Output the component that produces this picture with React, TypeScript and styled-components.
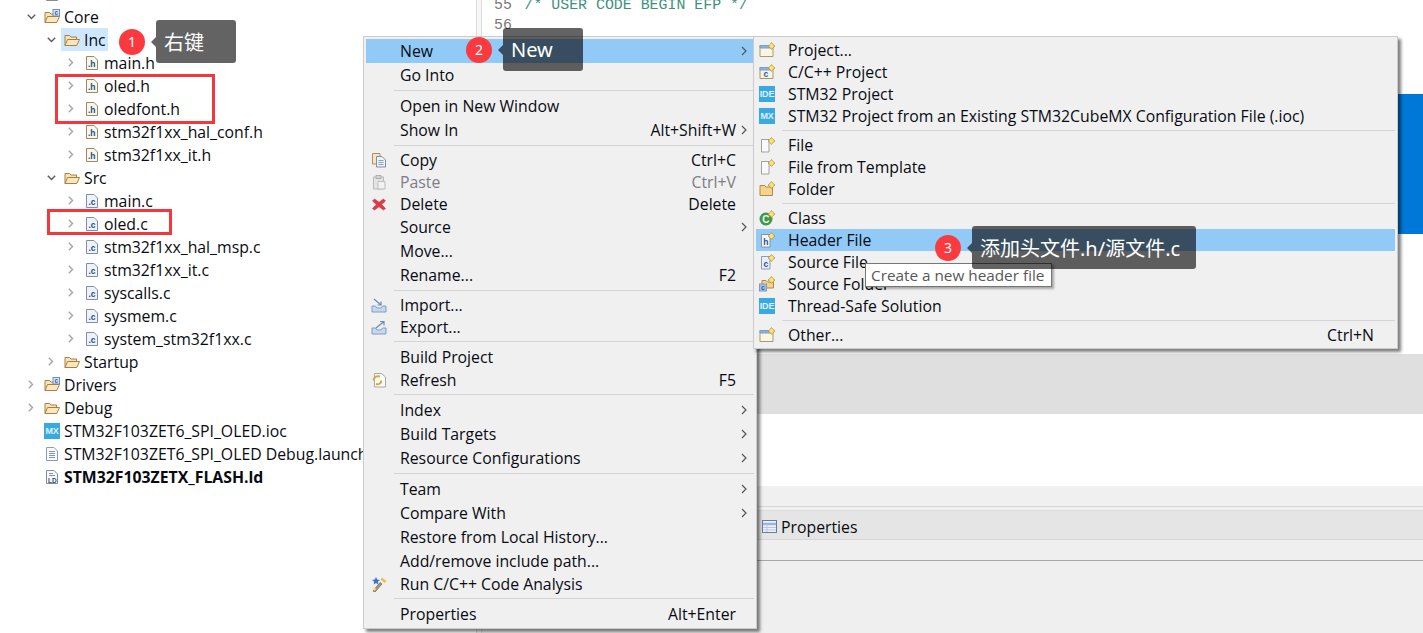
import React from 'react';
import styled, { createGlobalStyle } from 'styled-components';

const UI_FONT = '"Open Sans", "Noto Sans CJK SC", sans-serif';

const GlobalStyle = createGlobalStyle`
  html, body {
    margin: 0;
    padding: 0;
    background: #fff;
    overflow: hidden;
  }
  * {
    box-sizing: border-box;
  }
`;

/* page */
const Page = styled.div`
  position: relative;
  width: 1423px;
  height: 633px;
  overflow: hidden;
  display: flex;
  background: #fff;
  color: #080b12;
  font-family: ${UI_FONT};
  font-size: 15.8px;
`;

const TreePane = styled.div`
  width: 477px;
  flex: none;
  overflow: hidden;
  white-space: nowrap;
  border-right: 1px solid #dcdcdc;
`;

const Sash = styled.div`
  width: 5px;
  flex: none;
  background: #f6f6f6;
  border-right: 1px solid #dcdcdc;
`;

const RightColumn = styled.div`
  flex: 1;
  display: flex;
  flex-direction: column;
  min-width: 0;
`;

/* tree */
const TreeList = styled.div`
  margin-top: -18px;
`;

const TreeRow = styled.div<{ $level: number }>`
  height: 23px;
  display: flex;
  align-items: center;
  padding-left: ${({ $level }) => 24 + $level * 20}px;
`;

const TreeChevron = styled.span`
  width: 14px;
  height: 23px;
  flex: none;
  display: flex;
  align-items: center;
  justify-content: center;
`;

const TreeEntry = styled.span<{ $selected?: boolean; $bold?: boolean }>`
  height: 23px;
  display: flex;
  align-items: center;
  margin-left: ${({ $selected }) => ($selected ? 3 : 4)}px;
  padding-left: ${({ $selected }) => ($selected ? 1 : 0)}px;
  padding-right: 2px;
  background: ${({ $selected }) => ($selected ? '#cde8ff' : 'transparent')};
  font-weight: ${({ $bold }) => ($bold ? 700 : 400)};
`;

const TreeIconSlot = styled.span`
  width: 22px;
  flex: none;
  display: flex;
  justify-content: flex-start;
  padding-left: 2px;
`;

/* editor and the views below it */
const CodePane = styled.div`
  height: 94px;
  overflow: hidden;
  font-family: "Liberation Mono", monospace;
  font-size: 14.9px;
`;

const CodeLines = styled.div`
  margin-top: -5px;
`;

const CodeLine = styled.div`
  height: 20px;
  line-height: 20px;
  display: flex;
  padding-left: 12px;
`;

const LineNumber = styled.span`
  width: 30.5px;
  color: #787878;
`;

const CodeComment = styled.span`
  color: #3f8f7f;
`;

const AccentBlock = styled.div`
  align-self: flex-end;
  width: 25px;
  height: 140px;
  flex: none;
  background: #0078d7;
`;

const EditorRest = styled.div`
  height: 120px;
  flex: none;
`;

const GreyBand = styled.div`
  height: 60px;
  flex: none;
  background: #dfdfdf;
`;

const WhiteBand = styled.div`
  height: 72px;
  flex: none;
`;

const ViewHeader = styled.div`
  height: 21px;
  flex: none;
  background: #f0f0f0;
  border-bottom: 1px solid #d6d6d6;
`;

const TabGap = styled.div`
  height: 4px;
  flex: none;
  background: #f0f0f0;
  border-bottom: 1px solid #dcdcdc;
`;

const TabBar = styled.div`
  height: 29px;
  flex: none;
  display: flex;
  align-items: center;
  gap: 3px;
  padding: 3px 0 0 280px;
  background: #e5e5e5;
  border-bottom: 1px solid #d6d6d6;
`;

const ToolStrip = styled.div`
  height: 21px;
  flex: none;
  background: #efefef;
  border-bottom: 1px solid #a8a8a8;
`;

const ViewBody = styled.div`
  flex: 1;
  background: #efefef;
`;

/* context menus */
const Menu = styled.div<{ $x: number; $width: number }>`
  position: absolute;
  left: ${({ $x }) => $x}px;
  top: 36px;
  width: ${({ $width }) => $width}px;
  padding: 2px;
  background: #f0f0f0;
  border: 1px solid #cbcbcb;
  box-shadow: 3px 3px 3px rgba(0, 0, 0, 0.5);
`;

const MenuRow = styled.div<{ $active?: boolean; $tall: boolean; $inset: number; $end: number }>`
  height: ${({ $tall }) => ($tall ? 24 : 22)}px;
  display: flex;
  align-items: center;
  padding-left: ${({ $inset }) => $inset}px;
  padding-right: ${({ $end }) => $end}px;
  background: ${({ $active }) => ($active ? '#91c9f7' : 'transparent')};
`;

const MenuIconSlot = styled.span`
  width: 29px;
  flex: none;
  display: flex;
  align-items: center;
`;

const MenuLabel = styled.span<{ $disabled?: boolean }>`
  flex: 1;
  white-space: nowrap;
  color: ${({ $disabled }) => ($disabled ? '#7d7d85' : 'inherit')};
`;

const MenuShortcut = styled.span<{ $disabled?: boolean }>`
  white-space: nowrap;
  color: ${({ $disabled }) => ($disabled ? '#7d7d85' : 'inherit')};
`;

const SubmenuArrow = styled.svg`
  width: 6px;
  height: 10px;
  flex: none;
  margin-left: 5px;
  margin-right: -11px;
`;

const MenuSeparator = styled.div<{ $inset: number }>`
  height: 7px;
  margin-left: ${({ $inset }) => $inset}px;
  display: flex;
  align-items: center;

  &::after {
    content: '';
    flex: 1;
    height: 1px;
    background: #d4d4d4;
  }
`;

const HoverHint = styled.div`
  position: absolute;
  left: 865px;
  top: 263px;
  width: 187px;
  height: 24px;
  padding-left: 5px;
  display: flex;
  align-items: center;
  background: #fff;
  border: 1px solid #767676;
  box-shadow: 2px 2px 2px rgba(0, 0, 0, 0.3);
  color: #575757;
  font-size: 15.3px;
  white-space: nowrap;
`;

/* red annotations from the tutorial */
const Outline = styled.div<{ $x: number; $y: number; $w: number; $h: number }>`
  position: absolute;
  left: ${({ $x }) => $x}px;
  top: ${({ $y }) => $y}px;
  width: ${({ $w }) => $w}px;
  height: ${({ $h }) => $h}px;
  border: 3px solid #f2383c;
`;

const Callout = styled.div<{ $x: number; $y: number }>`
  position: absolute;
  left: ${({ $x }) => $x}px;
  top: ${({ $y }) => $y}px;
  height: 43px;
  display: flex;
  align-items: center;
  gap: 11px;
`;

const StepDot = styled.div`
  width: 26px;
  height: 26px;
  border-radius: 50%;
  background: #fb3a3f;
  color: #fff;
  display: flex;
  align-items: center;
  justify-content: center;
  font-family: "Noto Sans", sans-serif;
  font-size: 14px;
`;

const CalloutBubble = styled.div`
  position: relative;
  height: 43px;
  min-width: 80px;
  padding: 0 16px 0 8px;
  display: flex;
  align-items: center;
  border-radius: 3px;
  background: rgba(0, 0, 0, 0.61);
  color: #fff;
  font-family: "Noto Sans", "Noto Sans CJK SC", sans-serif;
  font-size: 20px;
  white-space: nowrap;

  &::before {
    content: '';
    position: absolute;
    left: -5px;
    top: 17px;
    border-style: solid;
    border-width: 5px 5px 5px 0;
    border-color: transparent rgba(0, 0, 0, 0.61) transparent transparent;
  }
`;

/* square product marks */
const ProductMark = styled.span`
  width: 16px;
  height: 16px;
  flex: none;
  display: flex;
  align-items: center;
  justify-content: center;
  background: #39a9e1;
  color: #dff2fb;
  font-family: "Liberation Sans", sans-serif;
  font-size: 9px;
  font-weight: 700;
  letter-spacing: -0.2px;
`;

/* drawn icons */
type IconName =
  | 'page' | 'folder' | 'sourceFolder' | 'hFile' | 'cFile' | 'textFile' | 'ldFile'
  | 'copy' | 'paste' | 'delete' | 'import' | 'export' | 'refresh' | 'wand'
  | 'newProject' | 'newCProject' | 'newFile' | 'newFolder' | 'newClass'
  | 'newHeader' | 'newSource' | 'newSourceFolder' | 'table' | 'ide' | 'mx';

const Spark = () => (
  <path d="M12.5 0.5 L14 2.5 L16 4 L14 5.5 L12.5 7.5 L11 5.5 L9 4 L11 2.5 Z" fill="#fbe37a" stroke="#b8923a" strokeWidth="0.8" />
);

const smallCode = (letter: string, x: number, y: number, fill = '#25507f') => (
  <text x={x} y={y} fontFamily="Liberation Sans, sans-serif" fontSize="8.5" fontWeight="700" fill={fill}>
    {letter}
  </text>
);

const Page16 = ({ stroke }: { stroke: string }) => (
  <path d="M2.5 1.5H10L13.5 5V14.5H2.5Z" fill="#f7f9fc" stroke={stroke} />
);

const FolderShape = () => (
  <>
    <path d="M1 13.5V3.5H5.5L7 5H12.5V8" fill="#f6e3b8" stroke="#a9803f" />
    <path d="M1 13.5L3.5 7.5H15.5L12.8 13.5Z" fill="#f9e6bd" stroke="#a9803f" />
  </>
);

const icons: Record<Exclude<IconName, 'ide' | 'mx'>, React.ReactNode> = {
  page: <Page16 stroke="#8d8d8d" />,
  folder: <FolderShape />,
  sourceFolder: (
    <>
      <FolderShape />
      <rect x="9" y="0.5" width="6.5" height="6.5" fill="#dbe6f5" stroke="#6c8ebf" />
      <text x="10.4" y="6" fontFamily="Liberation Sans, sans-serif" fontSize="6.5" fontWeight="700" fill="#2f5f9f">c</text>
    </>
  ),
  hFile: (
    <>
      <path d="M2.5 1.5H10L13.5 5V14.5H2.5Z" fill="#f8f6ee" stroke="#9c8a5c" />
      {smallCode('.h', 4, 12)}
    </>
  ),
  cFile: (
    <>
      <path d="M2.5 1.5H10L13.5 5V14.5H2.5Z" fill="#eef3fa" stroke="#7f8ea6" />
      {smallCode('.c', 4.5, 12)}
    </>
  ),
  textFile: (
    <>
      <Page16 stroke="#8c9bb5" />
      <path d="M5 5.5H11M5 7.5H11M5 9.5H11M5 11.5H11" stroke="#7f93b8" />
    </>
  ),
  ldFile: (
    <>
      <Page16 stroke="#7f8ea6" />
      <path d="M5 4.5H9M5 6.5H11" stroke="#7f93b8" />
      <text x="4" y="14" fontFamily="Liberation Sans, sans-serif" fontSize="6.5" fontWeight="700" fill="#3b4c66">LD</text>
    </>
  ),
  copy: (
    <>
      <path d="M1.5 1.5H9V12H1.5Z" fill="#f3e6c6" stroke="#a9925f" />
      <path d="M5.5 4.5H11L14.5 8V15H5.5Z" fill="#eef2fa" stroke="#7f8ea6" />
      <path d="M7.5 8.5H12.5M7.5 10.5H12.5M7.5 12.5H12.5" stroke="#8aa0c4" />
    </>
  ),
  paste: (
    <>
      <path d="M2.5 3H12.5V15H2.5Z" fill="#e3e3e3" stroke="#b9b9b9" />
      <path d="M5 1.5H10V4.5H5Z" fill="#d4d4d4" stroke="#adadad" />
      <path d="M7 7.5H14V15H7Z" fill="#f2f2f2" stroke="#bdbdbd" />
    </>
  ),
  delete: <path d="M3.5 3L8 6.2L12.5 3L14.5 5L10.6 8.5L14.5 12.5L12.5 14L8 10.8L3.5 14L1.5 12.5L5.4 8.5L1.5 5Z" fill="#dc3a44" stroke="#c23a44" strokeWidth="0.6" />,
  import: (
    <>
      <path d="M1 9V15H15V9H11.5L10 11H6L4.5 9Z" fill="#c8d8ec" stroke="#7f9cc4" />
      <path d="M3 2L10 8M10 4.5V8H6.5" fill="none" stroke="#6a8ab8" strokeWidth="1.2" />
    </>
  ),
  export: (
    <>
      <path d="M1 9V15H15V9H11.5L10 11H6L4.5 9Z" fill="#c8d8ec" stroke="#7f9cc4" />
      <path d="M5 9L13 2.5M9 2.5H13V6.5" fill="none" stroke="#6a8ab8" strokeWidth="1.2" />
    </>
  ),
  refresh: (
    <>
      <path d="M3.5 1.5H10.5L14.5 5V15H3.5Z" fill="#fbfbf8" stroke="#a8a8a0" />
      <path d="M9 4.5C5 3.5 2 6 3 8.5M5 12C8 13 10.5 11 10 8.5" fill="none" stroke="#d6a93f" strokeWidth="2" />
    </>
  ),
  wand: (
    <>
      <path d="M2 15L4 16L11 8L9 6.5Z" fill="#a79a83" stroke="#6b6250" strokeWidth="0.7" />
      <path d="M1.5 12.5L3.5 15L5 13L3.5 11Z" fill="#f7e27d" />
      <path d="M5 1L6.2 3.5L9 4L6.8 5.8L7.3 8.5L5 7L2.6 8.5L3.2 5.8L1 4L3.8 3.5Z" fill="#3f6fd0" />
      <path d="M11 1.5L15.5 5L13.5 7L9.5 3.5Z" fill="#e8c04f" />
    </>
  ),
  newProject: (
    <>
      <path d="M1 3.5H14V14.5H1Z" fill="#fbf6e4" stroke="#a99a6a" />
      <path d="M1 3.5H13V6H1Z" fill="#8db4e0" stroke="#7a9cc8" />
      <Spark />
    </>
  ),
  newCProject: (
    <>
      <path d="M1 3.5H14V14.5H1Z" fill="#f5f5ef" stroke="#a9985f" />
      <path d="M1 3.5H13V6H1Z" fill="#8db4e0" stroke="#7a9cc8" />
      {smallCode('c', 4.5, 13, '#2d5a96')}
      <Spark />
    </>
  ),
  newFile: (
    <>
      <path d="M2.5 2.5H10V15H2.5 Z" fill="#f7f9fc" stroke="#a3a392" />
      <Spark />
    </>
  ),
  newFolder: (
    <>
      <path d="M1 14.5V4.5H5.5L7 6H13.5V14.5Z" fill="#f5d28e" stroke="#b08a45" />
      <Spark />
    </>
  ),
  newClass: (
    <>
      <circle cx="7" cy="9" r="6.5" fill="#3e9a48" />
      <text x="3.2" y="12.5" fontFamily="Liberation Sans, sans-serif" fontSize="10" fontWeight="700" fill="#eef8ea">C</text>
      <Spark />
    </>
  ),
  newHeader: (
    <>
      <path d="M2.5 2.5H11V15H2.5Z" fill="#f6f8fc" stroke="#8d8fa6" />
      {smallCode('h', 4.2, 13, '#1f4f96')}
      <Spark />
    </>
  ),
  newSource: (
    <>
      <path d="M2.5 2.5H11V15H2.5Z" fill="#eaf0f9" stroke="#8d9ab8" />
      {smallCode('c', 4.5, 13, '#1f4f96')}
      <Spark />
    </>
  ),
  newSourceFolder: (
    <>
      <path d="M3 12V4.5H7L8.5 6H14.5V12Z" fill="#f5d28e" stroke="#b08a45" />
      <rect x="0.5" y="8" width="7" height="7" fill="#a9c0e4" stroke="#7c96c2" />
      <text x="2" y="14" fontFamily="Liberation Sans, sans-serif" fontSize="7" fontWeight="700" fill="#2f5f9f">c</text>
      <Spark />
    </>
  ),
  table: (
    <>
      <rect x="0.5" y="1.5" width="14" height="12" fill="#eef2f8" stroke="#5f7ea8" />
      <path d="M1 5H14" stroke="#9db4d4" strokeWidth="2.5" />
      <path d="M1 8.5H14M1 11H14M5 5V13" stroke="#b8c7dd" />
    </>
  ),
};

const Icon = ({ name }: { name?: IconName }) => {
  if (!name) return null;
  if (name === 'ide') return <ProductMark>IDE</ProductMark>;
  if (name === 'mx') return <ProductMark>MX</ProductMark>;
  return (
    <svg width="16" height="16" viewBox="0 0 16 16" style={{ flex: 'none' }}>
      {icons[name]}
    </svg>
  );
};

/* data */
type TreeItem = {
  level: number;
  label?: string;
  icon: IconName;
  arrow?: 'open' | 'closed';
  selected?: boolean;
  bold?: boolean;
};

const treeItems: TreeItem[] = [
  { level: 0, icon: 'page' },
  { level: 0, label: 'Core', icon: 'sourceFolder', arrow: 'open' },
  { level: 1, label: 'Inc', icon: 'folder', arrow: 'open', selected: true },
  { level: 2, label: 'main.h', icon: 'hFile', arrow: 'closed' },
  { level: 2, label: 'oled.h', icon: 'hFile', arrow: 'closed' },
  { level: 2, label: 'oledfont.h', icon: 'hFile', arrow: 'closed' },
  { level: 2, label: 'stm32f1xx_hal_conf.h', icon: 'hFile', arrow: 'closed' },
  { level: 2, label: 'stm32f1xx_it.h', icon: 'hFile', arrow: 'closed' },
  { level: 1, label: 'Src', icon: 'folder', arrow: 'open' },
  { level: 2, label: 'main.c', icon: 'cFile', arrow: 'closed' },
  { level: 2, label: 'oled.c', icon: 'cFile', arrow: 'closed' },
  { level: 2, label: 'stm32f1xx_hal_msp.c', icon: 'cFile', arrow: 'closed' },
  { level: 2, label: 'stm32f1xx_it.c', icon: 'cFile', arrow: 'closed' },
  { level: 2, label: 'syscalls.c', icon: 'cFile', arrow: 'closed' },
  { level: 2, label: 'sysmem.c', icon: 'cFile', arrow: 'closed' },
  { level: 2, label: 'system_stm32f1xx.c', icon: 'cFile', arrow: 'closed' },
  { level: 1, label: 'Startup', icon: 'folder', arrow: 'closed' },
  { level: 0, label: 'Drivers', icon: 'sourceFolder', arrow: 'closed' },
  { level: 0, label: 'Debug', icon: 'folder', arrow: 'closed' },
  { level: 0, label: 'STM32F103ZET6_SPI_OLED.ioc', icon: 'mx' },
  { level: 0, label: 'STM32F103ZET6_SPI_OLED Debug.launch', icon: 'textFile' },
  { level: 0, label: 'STM32F103ZETX_FLASH.ld', icon: 'ldFile', bold: true },
];

type MenuItem =
  | 'sep'
  | {
      label: string;
      icon?: IconName;
      shortcut?: string;
      more?: boolean;
      disabled?: boolean;
      active?: boolean;
    };

const mainMenu: MenuItem[] = [
  { label: 'New', more: true, active: true },
  { label: 'Go Into' },
  'sep',
  { label: 'Open in New Window' },
  { label: 'Show In', shortcut: 'Alt+Shift+W', more: true },
  'sep',
  { label: 'Copy', icon: 'copy', shortcut: 'Ctrl+C' },
  { label: 'Paste', icon: 'paste', shortcut: 'Ctrl+V', disabled: true },
  { label: 'Delete', icon: 'delete', shortcut: 'Delete' },
  { label: 'Source', more: true },
  { label: 'Move...' },
  { label: 'Rename...', shortcut: 'F2' },
  'sep',
  { label: 'Import...', icon: 'import' },
  { label: 'Export...', icon: 'export' },
  'sep',
  { label: 'Build Project' },
  { label: 'Refresh', icon: 'refresh', shortcut: 'F5' },
  'sep',
  { label: 'Index', more: true },
  { label: 'Build Targets', more: true },
  { label: 'Resource Configurations', more: true },
  'sep',
  { label: 'Team', more: true },
  { label: 'Compare With', more: true },
  { label: 'Restore from Local History...' },
  { label: 'Add/remove include path...' },
  { label: 'Run C/C++ Code Analysis', icon: 'wand' },
  'sep',
  { label: 'Properties', shortcut: 'Alt+Enter' },
];

const newMenu: MenuItem[] = [
  { label: 'Project...', icon: 'newProject' },
  { label: 'C/C++ Project', icon: 'newCProject' },
  { label: 'STM32 Project', icon: 'ide' },
  { label: 'STM32 Project from an Existing STM32CubeMX Configuration File (.ioc)', icon: 'mx' },
  'sep',
  { label: 'File', icon: 'newFile' },
  { label: 'File from Template', icon: 'newFile' },
  { label: 'Folder', icon: 'newFolder' },
  'sep',
  { label: 'Class', icon: 'newClass' },
  { label: 'Header File', icon: 'newHeader', active: true },
  { label: 'Source File', icon: 'newSource' },
  { label: 'Source Folder', icon: 'newSourceFolder' },
  { label: 'Thread-Safe Solution', icon: 'ide' },
  'sep',
  { label: 'Other...', icon: 'newProject', shortcut: 'Ctrl+N' },
];

const TreeArrow = ({ kind }: { kind?: 'open' | 'closed' }) => {
  if (kind === 'open') {
    return (
      <svg width="9" height="6" viewBox="0 0 9 6">
        <path d="M0.8 0.8L4.5 4.5L8.2 0.8" fill="none" stroke="#5c5c5c" strokeWidth="1.4" />
      </svg>
    );
  }
  if (kind === 'closed') {
    return (
      <svg width="6" height="9" viewBox="0 0 6 9">
        <path d="M0.8 0.8L4.5 4.5L0.8 8.2" fill="none" stroke="#a6a6a6" strokeWidth="1.4" />
      </svg>
    );
  }
  return null;
};

const ContextMenu = ({
  items, x, width, inset, end, sepInset, tallPlain,
}: {
  items: MenuItem[];
  x: number;
  width: number;
  inset: number;
  end: number;
  sepInset: number;
  tallPlain: boolean;
}) => (
  <Menu $x={x} $width={width}>
    {items.map((item, i) =>
      item === 'sep' ? (
        <MenuSeparator key={i} $inset={sepInset} />
      ) : (
        <MenuRow key={i} $active={item.active} $tall={tallPlain && !item.icon} $inset={inset} $end={end}>
          <MenuIconSlot>
            <Icon name={item.icon} />
          </MenuIconSlot>
          <MenuLabel $disabled={item.disabled}>{item.label}</MenuLabel>
          {item.shortcut && <MenuShortcut $disabled={item.disabled}>{item.shortcut}</MenuShortcut>}
          {item.more && (
            <SubmenuArrow viewBox="0 0 6 10">
              <path d="M1 1L5 5L1 9" fill="none" stroke="#555" strokeWidth="1.2" />
            </SubmenuArrow>
          )}
        </MenuRow>
      ),
    )}
  </Menu>
);

const Step = ({ n, x, y, text }: { n: number; x: number; y: number; text: string }) => (
  <Callout $x={x} $y={y}>
    <StepDot>{n}</StepDot>
    <CalloutBubble>{text}</CalloutBubble>
  </Callout>
);

export default function App() {
  return (
    <>
      <GlobalStyle />
      <Page>
        <TreePane>
          <TreeList>
            {treeItems.map((item, i) => (
              <TreeRow key={i} $level={item.level}>
                <TreeChevron>
                  <TreeArrow kind={item.arrow} />
                </TreeChevron>
                <TreeEntry $selected={item.selected} $bold={item.bold}>
                  <TreeIconSlot>
                    <Icon name={item.icon} />
                  </TreeIconSlot>
                  {item.label}
                </TreeEntry>
              </TreeRow>
            ))}
          </TreeList>
        </TreePane>
        <Sash />
        <RightColumn>
          <CodePane>
            <CodeLines>
              <CodeLine>
                <LineNumber>55</LineNumber>
                <CodeComment>/* USER CODE BEGIN EFP */</CodeComment>
              </CodeLine>
              <CodeLine>
                <LineNumber>56</LineNumber>
              </CodeLine>
            </CodeLines>
          </CodePane>
          <AccentBlock />
          <EditorRest />
          <GreyBand />
          <WhiteBand />
          <ViewHeader />
          <TabGap />
          <TabBar>
            <Icon name="table" />
            Properties
          </TabBar>
          <ToolStrip />
          <ViewBody />
        </RightColumn>

        <Outline $x={55} $y={74} $w={160} $h={50} />
        <Outline $x={47} $y={209} $w={125} $h={26} />

        <ContextMenu items={mainMenu} x={363} width={394} inset={5} end={18} sepInset={28} tallPlain />
        <ContextMenu items={newMenu} x={753} width={645} inset={3} end={21} sepInset={26} tallPlain={false} />
        <HoverHint>Create a new header file</HoverHint>

        <Step n={1} x={119} y={20} text="右键" />
        <Step n={2} x={466} y={28} text="New" />
        <Step n={3} x={935} y={226} text="添加头文件.h/源文件.c" />
      </Page>
    </>
  );
}
